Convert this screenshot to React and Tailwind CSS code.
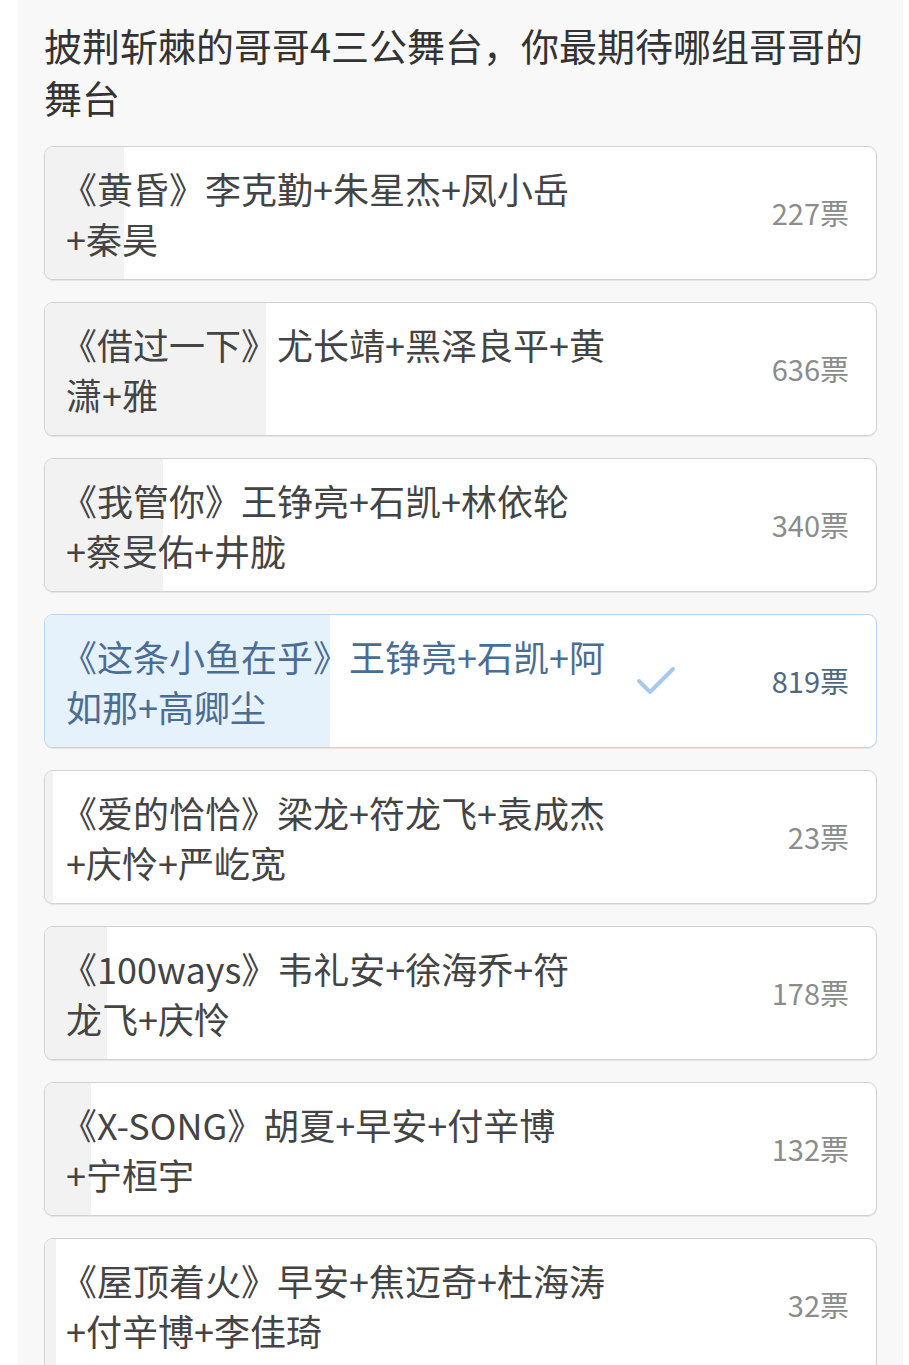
import React from "react";

const options = [
  { lines: ["《黄昏》李克勤+朱星杰+凤小岳", "+秦昊"], votes: 227 },
  { lines: ["《借过一下》尤长靖+黑泽良平+黄", "潇+雅"], votes: 636 },
  { lines: ["《我管你》王铮亮+石凯+林依轮", "+蔡旻佑+井胧"], votes: 340 },
  { lines: ["《这条小鱼在乎》王铮亮+石凯+阿", "如那+高卿尘"], votes: 819, picked: true },
  { lines: ["《爱的恰恰》梁龙+符龙飞+袁成杰", "+庆怜+严屹宽"], votes: 23 },
  { lines: ["《100ways》韦礼安+徐海乔+符", "龙飞+庆怜"], votes: 178 },
  { lines: ["《X-SONG》胡夏+早安+付辛博", "+宁桓宇"], votes: 132 },
  { lines: ["《屋顶着火》早安+焦迈奇+杜海涛", "+付辛博+李佳琦"], votes: 32 },
];

const total = options.reduce((s, o) => s + o.votes, 0);

const Check = () => (
  <svg width="40" height="30" viewBox="0 0 40 30" fill="none">
    <path d="M3 15 L14 26 L37 3" stroke="#a6c9ee" strokeWidth="4" strokeLinecap="round" strokeLinejoin="round" />
  </svg>
);

export default function App() {
  return (
    <div className="min-h-screen bg-white" style={{ fontFamily: '"Noto Sans CJK SC", "Noto Sans", sans-serif' }}>
      <div className="ml-[18px] mr-[6px] bg-[#f8f8f8] px-[26px] pt-[19px] pb-10 min-h-screen">
        <h1 className="text-[38px] leading-[52px] text-[#333] font-normal whitespace-nowrap">
          披荆斩棘的哥哥4三公舞台，你最期待哪组哥哥的
          <br />
          舞台
        </h1>

        <div className="mt-[23px] flex flex-col gap-[22px]">
          {options.map((o, i) => (
            <div
              key={i}
              className={`relative h-[134px] rounded-[9px] border overflow-hidden bg-white shadow-[0_1px_1px_rgba(0,0,0,0.08)] ${
                o.picked ? "border-[#bcd5ec]" : "border-[#d2d2d2]"
              }`}
            >
              <div
                className={`absolute left-0 top-0 bottom-0 ${o.picked ? "bg-[#e5f1fb]" : "bg-[#f2f2f2]"}`}
                style={{ width: `${(o.votes / total) * 100}%` }}
              />
              <div className="relative h-full flex items-center pl-[16px] pr-[27px]">
                <div
                  className={`w-[575px] text-[36px] leading-[50px] ${
                    o.picked ? "text-[#4a6d93]" : "text-[#444]"
                  }`}
                >
                  {o.lines.map((l, j) => (
                    <div key={j} className={`whitespace-nowrap ${l.startsWith("《") ? "" : "pl-[5px]"}`}>
                      {l}
                    </div>
                  ))}
                </div>
                <div className="w-[40px] flex justify-center">{o.picked && <Check />}</div>
                <div
                  className={`ml-auto text-[29px] ${o.picked ? "text-[#4f6882]" : "text-[#8c8c8c]"}`}
                >
                  {o.votes}票
                </div>
              </div>
            </div>
          ))}
        </div>
      </div>
    </div>
  );
}
